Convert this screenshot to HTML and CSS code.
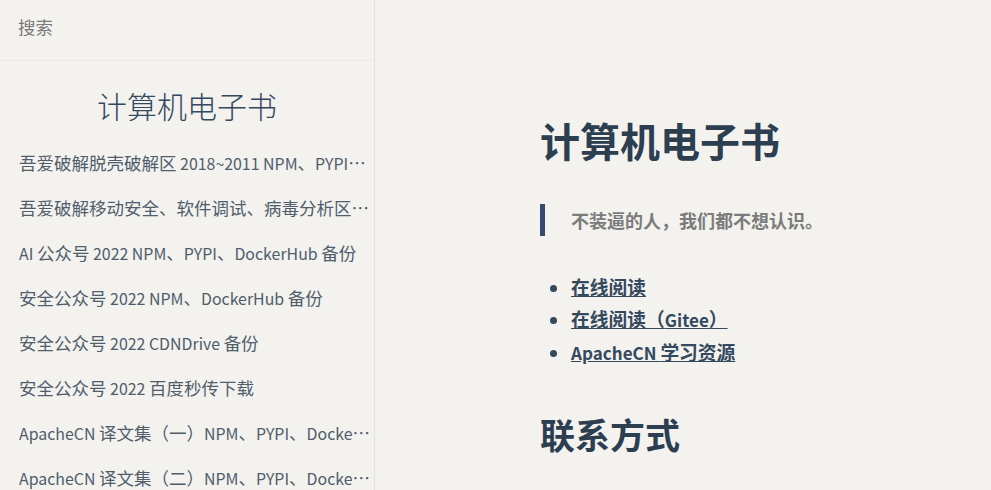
FILE: index.html
```html
<!DOCTYPE html>
<html lang="zh-CN">
<head>
<meta charset="utf-8">
<title>计算机电子书</title>
<link rel="stylesheet" href="styles.css">
</head>
<body>
<div class="app">
  <aside class="sidebar">
    <div class="search"><span class="search-input">搜索</span></div>
    <h1 class="app-name">计算机电子书</h1>
    <ul class="nav">
      <li><a href="#">吾爱破解脱壳破解区<span class="en"> 2018~2011 NPM</span>、<span class="en">PYPI</span>、<span class="en">DockerHub </span>备份</a></li>
      <li><a href="#">吾爱破解移动安全、软件调试、病毒分析区<span class="en"> NPM</span>、<span class="en">PYPI</span>、<span class="en">DockerHub </span>备份</a></li>
      <li><a href="#"><span class="en">AI </span>公众号<span class="en"> 2022 NPM</span>、<span class="en">PYPI</span>、<span class="en">DockerHub </span>备份</a></li>
      <li><a href="#">安全公众号<span class="en"> 2022 NPM</span>、<span class="en">DockerHub </span>备份</a></li>
      <li><a href="#">安全公众号<span class="en"> 2022 CDNDrive </span>备份</a></li>
      <li><a href="#">安全公众号<span class="en"> 2022 </span>百度秒传下载</a></li>
      <li><a href="#"><span class="en">ApacheCN </span>译文集（一）<span class="en">NPM</span>、<span class="en">PYPI</span>、<span class="en">DockerHub </span>备份</a></li>
      <li><a href="#"><span class="en">ApacheCN </span>译文集（二）<span class="en">NPM</span>、<span class="en">PYPI</span>、<span class="en">DockerHub </span>备份</a></li>
    </ul>
  </aside>
  <main class="content">
    <article class="markdown-section">
      <h1 class="title">计算机电子书</h1>
      <blockquote class="quote"><p>不装逼的人，我们都不想认识。</p></blockquote>
      <ul class="links">
        <li><a href="#">在线阅读</a></li>
        <li><a href="#">在线阅读（<span class="en">Gitee</span>）</a></li>
        <li><a href="#"><span class="en">ApacheCN </span>学习资源</a></li>
      </ul>
      <h2 class="subtitle">联系方式</h2>
    </article>
  </main>
</div>
</body>
</html>
```

FILE: styles.css
```css
* { box-sizing: border-box; }
html, body {
  margin: 0;
  padding: 0;
  height: 490px;
  overflow: hidden;
}
body {
  background: #f3f2ef;
  font-family: "Noto Sans CJK SC", "Noto Sans", sans-serif;
  color: #34495e;
  -webkit-font-smoothing: antialiased;
}
.en {
  font-size: 0.91em;
}
.app {
  display: flex;
  height: 490px;
}
.sidebar {
  width: 375px;
  flex: none;
  border-right: 1px solid #e2e1de;
  overflow: hidden;
}
.search {
  height: 61px;
  border-bottom: 1px solid #eae9e6;
  padding: 0 18px 8px;
  display: flex;
  align-items: center;
}
.search-input {
  font-size: 17.5px;
  color: #7a7a7a;
}
.app-name {
  margin: 24px 0 15px;
  text-align: center;
  font-size: 30px;
  font-weight: 300;
  line-height: 40px;
  color: #34495e;
}
.nav {
  list-style: none;
  margin: 0 0 0 19px;
  padding: 0;
  width: 353px;
}
.nav li {
  height: 45px;
  line-height: 45px;
  white-space: nowrap;
  overflow: hidden;
  text-overflow: ellipsis;
  font-size: 17.5px;
  color: #505d6b;
}
.nav a {
  color: #505d6b;
  text-decoration: none;
}
.content {
  flex: 1;
  padding: 116px 0 0 165px;
}
.title {
  margin: 0;
  font-size: 40px;
  line-height: 48px;
  font-weight: 700;
  color: #2c3e50;
}
.quote {
  margin: 40px 0 0;
  border-left: 5px solid #364a6d;
  padding: 0 0 0 26px;
}
.quote p {
  margin: 0;
  font-size: 18px;
  line-height: 32px;
  font-weight: 700;
  color: #7b7b7b;
}
.links {
  margin: 35px 0 0;
  padding-left: 31px;
  font-size: 18.75px;
  line-height: 32px;
  color: #34495e;
}
.links a {
  color: #34495e;
  font-weight: 700;
  text-decoration: underline;
}
.subtitle {
  margin: 44px 0 0;
  font-size: 35px;
  line-height: 42px;
  font-weight: 700;
  color: #2c3e50;
}
```
